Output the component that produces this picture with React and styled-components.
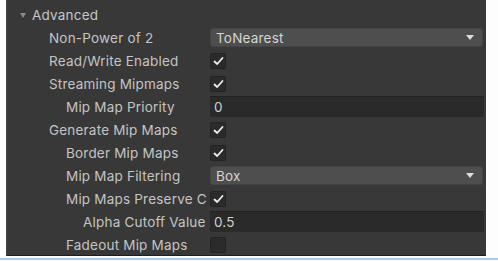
import styled, { createGlobalStyle } from "styled-components";

const Global = createGlobalStyle`
  html, body {
    margin: 0;
    padding: 0;
    background: #fdfdfd;
  }
  body {
    font-family: Inter, "Noto Sans", sans-serif;
  }
`;

const Page = styled.div`
  width: 498px;
  height: 261px;
  overflow: hidden;
`;

const Panel = styled.section`
  margin-left: 6px;
  width: 480px;
  height: 256px;
  box-sizing: border-box;
  background: #383838;
  border-left: 1px solid #474747;
  border-bottom: 1px solid #1c1f20;
  padding-top: 4px;
  overflow: hidden;
`;

const Underline = styled.div`
  margin-top: 2px;
  height: 2px;
  background: #a9c9ea;
`;

const Header = styled.div`
  height: 22px;
  display: flex;
  align-items: center;
  gap: 6px;
  padding-left: 13px;
  color: #c6c6c6;
  font-size: 13.5px;
  letter-spacing: 0.2px;
`;

const Arrow = styled.span`
  width: 0;
  height: 0;
  border-left: 3.5px solid transparent;
  border-right: 3.5px solid transparent;
  border-top: 5px solid #8a8a8a;
  margin-top: 1px;
`;

const Row = styled.div`
  height: 23px;
  display: flex;
  align-items: center;
`;

const Label = styled.div`
  width: 200px;
  margin-right: 3px;
  flex-shrink: 0;
  box-sizing: border-box;
  padding-left: ${({ $indent }) => 42 + $indent * 17}px;
  color: #c4c4c4;
  font-size: 13.5px;
  letter-spacing: 0.2px;
  white-space: nowrap;
  overflow: hidden;
`;

const Dropdown = styled.div`
  width: 273px;
  height: 19px;
  box-sizing: border-box;
  display: flex;
  align-items: center;
  justify-content: space-between;
  padding: 0 8px 0 5px;
  background: #4e4e4e;
  border: 1px solid #444;
  border-radius: 3px;
  color: #d4d4d4;
  font-size: 13.5px;
  letter-spacing: 0.2px;
`;

const Caret = styled.span`
  width: 0;
  height: 0;
  border-left: 4px solid transparent;
  border-right: 4px solid transparent;
  border-top: 5px solid #dcdcdc;
`;

const Field = styled.div`
  width: 274px;
  height: 21px;
  box-sizing: border-box;
  display: flex;
  align-items: center;
  padding-left: 4px;
  background: #2a2a2a;
  border-top: 1px solid #222;
  color: #d0d0d0;
  font-size: 13.5px;
  letter-spacing: 0.2px;
`;

const Box = styled.div`
  width: 16px;
  height: 16px;
  box-sizing: border-box;
  display: flex;
  align-items: center;
  justify-content: center;
  background: #2b2b2b;
  border: 1px solid #232323;
  border-radius: 2px;
`;

const Check = () => (
  <svg width="11" height="10" viewBox="0 0 11 10">
    <path d="M1.5 5.5 L4.2 8 L9.5 2" fill="none" stroke="#f0f0f0" strokeWidth="1.8" strokeLinecap="round" strokeLinejoin="round" />
  </svg>
);

const rows = [
  { label: "Non-Power of 2", indent: 0, type: "select", value: "ToNearest" },
  { label: "Read/Write Enabled", indent: 0, type: "check", value: true },
  { label: "Streaming Mipmaps", indent: 0, type: "check", value: true },
  { label: "Mip Map Priority", indent: 1, type: "field", value: "0" },
  { label: "Generate Mip Maps", indent: 0, type: "check", value: true },
  { label: "Border Mip Maps", indent: 1, type: "check", value: true },
  { label: "Mip Map Filtering", indent: 1, type: "select", value: "Box" },
  { label: "Mip Maps Preserve Coverage", indent: 1, type: "check", value: true },
  { label: "Alpha Cutoff Value", indent: 2, type: "field", value: "0.5" },
  { label: "Fadeout Mip Maps", indent: 1, type: "check", value: false },
];

const Control = ({ type, value }) => {
  if (type === "select")
    return (
      <Dropdown>
        {value}
        <Caret />
      </Dropdown>
    );
  if (type === "field") return <Field>{value}</Field>;
  return <Box>{value ? <Check /> : null}</Box>;
};

export default function App() {
  return (
    <Page>
      <Global />
      <Panel>
        <Header>
          <Arrow />
          Advanced
        </Header>
        {rows.map((r, i) => (
          <Row key={i}>
            <Label $indent={r.indent}>{r.label}</Label>
            <Control type={r.type} value={r.value} />
          </Row>
        ))}
      </Panel>
      <Underline />
    </Page>
  );
}
